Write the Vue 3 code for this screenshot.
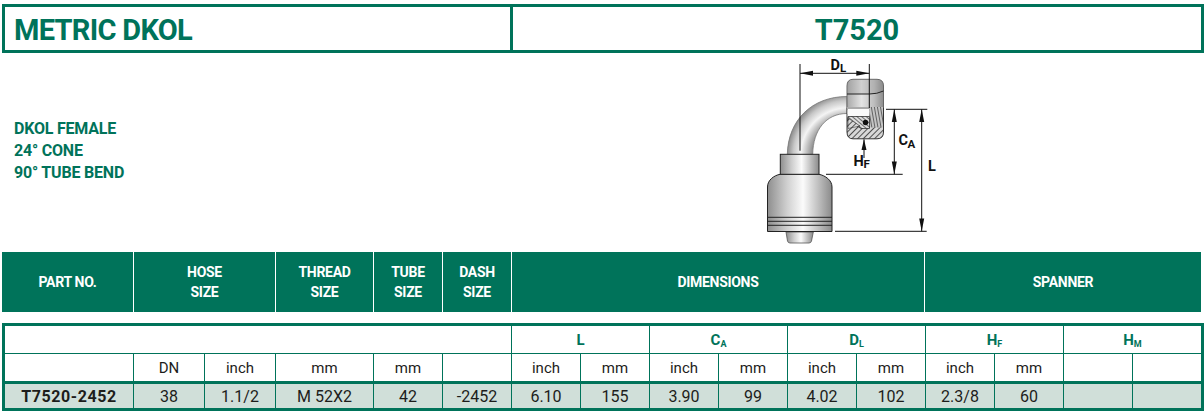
<template>
  <div class="sheet">
    <div class="title-bar">
      <h1 class="family">METRIC DKOL</h1>
      <h1 class="code">T7520</h1>
    </div>

    <div class="intro">
      <ul class="features">
        <li v-for="f in features" :key="f">{{ f }}</li>
      </ul>
      <svg class="drawing" viewBox="700 53 260 199" width="260" height="199">
        <defs>
          <linearGradient id="body" x1="0" x2="1" y1="0" y2="0">
            <stop offset="0" stop-color="#8e8e8e" />
            <stop offset="0.3" stop-color="#cfcfcf" />
            <stop offset="0.55" stop-color="#fbfbfb" />
            <stop offset="0.8" stop-color="#bcbcbc" />
            <stop offset="1" stop-color="#8a8a8a" />
          </linearGradient>
          <linearGradient id="nut" x1="0" x2="1" y1="0" y2="0">
            <stop offset="0" stop-color="#a8a8a8" />
            <stop offset="0.4" stop-color="#e4e4e4" />
            <stop offset="0.75" stop-color="#bcbcbc" />
            <stop offset="1" stop-color="#8c8c8c" />
          </linearGradient>
          <radialGradient id="tube" gradientUnits="userSpaceOnUse" cx="848" cy="155" r="62">
            <stop offset="0.55" stop-color="#7f7f7f" />
            <stop offset="0.76" stop-color="#f4f4f4" />
            <stop offset="0.88" stop-color="#c8c8c8" />
            <stop offset="1" stop-color="#808080" />
          </radialGradient>
          <pattern id="hatch" width="4" height="4" patternUnits="userSpaceOnUse" patternTransform="rotate(-45 0 0)">
            <rect width="4" height="4" fill="#d8d8d8" />
            <line x1="0" y1="0" x2="4" y2="0" stroke="#222" stroke-width="1.5" />
          </pattern>
          <pattern id="hatch2" width="3" height="3" patternUnits="userSpaceOnUse" patternTransform="rotate(40 0 0)">
            <rect width="3" height="3" fill="#ddd" />
            <line x1="0" y1="0" x2="3" y2="0" stroke="#222" stroke-width="1.2" />
          </pattern>
          <pattern id="thread" width="3" height="3" patternUnits="userSpaceOnUse" patternTransform="rotate(80 0 0)">
            <rect width="3" height="3" fill="#c4c4c4" />
            <line x1="0" y1="0" x2="3" y2="0" stroke="#222" stroke-width="1.2" />
          </pattern>
        </defs>

        <!-- tube bend -->
        <path d="M787.3 154.5C788 120 812 96.5 847 96.5V113.5C826 113.5 813 130 812.7 154.5Z" fill="url(#tube)" stroke="#777" stroke-width="0.8" />

        <!-- nut -->
        <path d="M847 108V86Q847 79.3 853 79.3H877Q883.5 79.3 883.5 86V108Z" fill="url(#nut)" stroke="#666" />
        <path d="M847.5 94V86Q847.5 80 853 80H877Q883 80 883 86V91Q876 94 869.5 94Z" fill="#888" fill-opacity="0.22" />
        <path d="M847 94H869.5Q877 94 883.5 91" fill="none" stroke="#222" />
        <path d="M847 108H883.5V132Q883.5 138.8 877 138.8H853Q847 138.8 847 132Z" fill="url(#hatch)" stroke="#333" />
        <rect x="847.5" y="108" width="22" height="8.5" fill="#fafafa" />
        <path d="M847 108H869.5" stroke="#aaa" stroke-width="2" />
        <path d="M869.5 107H883V127.5H869.5Z" fill="url(#thread)" />
        <path d="M848 116.5H869.5V128.5H861L848 120Z" fill="url(#hatch2)" stroke="#222" stroke-width="0.7" />
        <path d="M848 118L860 126L848 128.5Z" fill="url(#hatch)" stroke="#222" stroke-width="0.5" />
        <circle cx="865.5" cy="122.5" r="2.7" fill="#111" />

        <!-- hose end -->
        <path d="M786 232H813.3L811.5 241Q811 243 809 243H790Q788 243 787.5 241Z" fill="url(#body)" stroke="#555" stroke-width="0.8" />
        <path d="M780 174.3H819C825 175.5 832 180 832 187V231.5H767.5V187C767.5 180 774 175.5 780 174.3Z" fill="url(#body)" stroke="#222" />
        <rect x="780.3" y="154.3" width="38.7" height="20" fill="url(#body)" stroke="#222" />
        <path d="M767.5 217.3H832M767.5 221.3H832M767.5 225.3H832" stroke="#222" />

        <!-- dimension lines -->
        <g stroke="#111" stroke-width="1" fill="none">
          <path d="M800 64V150.7M869.3 64V108M800 73.3H869.3" />
          <path d="M886 109.3H927.3M826 174.3H902.7M835 231.3H926.7" />
          <path d="M894.3 109.3V174.3M921.7 109.3V231.3M864 139.3V158" />
        </g>
        <g fill="#111">
          <path d="M800 73.3L813 70.8V75.8ZM869.3 73.3L856.3 70.8V75.8Z" />
          <path d="M894.3 109.3L891.8 122H896.8ZM894.3 174.3L891.8 161.6H896.8Z" />
          <path d="M921.7 109.3L919.2 122H924.2ZM921.7 231.3L919.2 218.6H924.2Z" />
          <path d="M864 139.3L861.5 150H866.5Z" />
        </g>
        <g class="dim">
          <text x="830.5" y="70">D</text><text class="small" x="840" y="72">L</text>
          <text x="898.5" y="145">C</text><text class="small" x="907.5" y="148">A</text>
          <text x="928" y="170.5">L</text>
          <text x="853.5" y="166">H</text><text class="small" x="863.5" y="167.5">F</text>
        </g>
      </svg>
    </div>

    <div class="head">
      <div v-for="h in heads" :key="h">{{ h }}</div>
    </div>

    <div class="data">
      <div class="cell blank"></div>
      <div v-for="d in dims" :key="d.n + d.s" class="cell dim-name">{{ d.n }}<sub>{{ d.s }}</sub></div>

      <div class="cell"></div>
      <div v-for="(u, i) in units" :key="i" class="cell">{{ u }}</div>

      <div class="cell row part">T7520-2452</div>
      <div v-for="(v, i) in values" :key="'v' + i" class="cell row">{{ v }}</div>
    </div>
  </div>
</template>

<script setup>
const features = ['DKOL FEMALE', '24° CONE', '90° TUBE BEND']

const heads = ['PART NO.', 'HOSE\nSIZE', 'THREAD\nSIZE', 'TUBE\nSIZE', 'DASH\nSIZE', 'DIMENSIONS', 'SPANNER']

const dims = [
  { n: 'L', s: '' },
  { n: 'C', s: 'A' },
  { n: 'D', s: 'L' },
  { n: 'H', s: 'F' },
  { n: 'H', s: 'M' }
]

const units = ['DN', 'inch', 'mm', 'mm', '', 'inch', 'mm', 'inch', 'mm', 'inch', 'mm', 'inch', 'mm', '', '']

const values = ['38', '1.1/2', 'M 52X2', '42', '-2452', '6.10', '155', '3.90', '99', '4.02', '102', '2.3/8', '60', '', '']
</script>

<style>
html,
body {
  background: #fff;
}
</style>

<style scoped>
.sheet {
  width: 1202px;
  height: 409px;
  padding: 4px 0 0 2px;
  font-family: Roboto, "Liberation Sans", sans-serif;
  color: #1d1d1b;
  overflow: hidden;
}

.title-bar {
  display: flex;
  height: 49px;
  box-sizing: border-box;
  border: 3px solid #00735a;
  color: #00735a;
}

h1 {
  margin: 0;
  font-weight: 700;
  line-height: 46px;
}

.family {
  width: 508px;
  box-sizing: border-box;
  padding-left: 9px;
  font-size: 29px;
  letter-spacing: -0.7px;
  border-right: 3px solid #00735a;
}

.code {
  flex: 1;
  text-align: center;
  font-size: 29px;
}

.intro {
  display: flex;
  height: 199px;
}

.features {
  list-style: none;
  margin: 0;
  padding: 65px 0 0 12px;
  color: #00735a;
  font-size: 16px;
  font-weight: 700;
  line-height: 22px;
  letter-spacing: -0.2px;
}

.drawing {
  display: block;
  margin-left: auto;
  margin-right: 244px;
}

.dim text {
  font-size: 14.5px;
  font-weight: 700;
  fill: #111;
}

.dim text.small {
  font-size: 11.5px;
}

.head {
  display: grid;
  grid-template-columns: 131px 141px 97px 68px 68px 412px 276px;
  gap: 1px;
  height: 60px;
  background: #fff;
}

.head div {
  display: flex;
  align-items: center;
  justify-content: center;
  background: #00735a;
  color: #fff;
  font-size: 14px;
  font-weight: 700;
  line-height: 20px;
  letter-spacing: -0.3px;
  text-align: center;
  white-space: pre-line;
}

.data {
  display: grid;
  grid-template-columns: 128px 70px 70px 97px 68px 68px repeat(10, 68px);
  grid-template-rows: 27px 27px 26px;
  gap: 1px;
  width: 1202px;
  box-sizing: border-box;
  margin-top: 11px;
  border: 3px solid #00735a;
  background: #00735a;
}

.cell {
  display: flex;
  align-items: center;
  justify-content: center;
  background: #fff;
  font-size: 15px;
}

.blank {
  grid-column: span 6;
}

.dim-name {
  grid-column: span 2;
  color: #00735a;
  font-size: 15px;
  font-weight: 700;
}

.dim-name sub {
  font-size: 9px;
  line-height: 1;
  margin-top: 9px;
  vertical-align: baseline;
}

.row {
  margin-top: 2px;
  background: #d0dfd9;
  font-size: 16px;
}

.part {
  font-weight: 700;
  letter-spacing: 0.6px;
}
</style>
